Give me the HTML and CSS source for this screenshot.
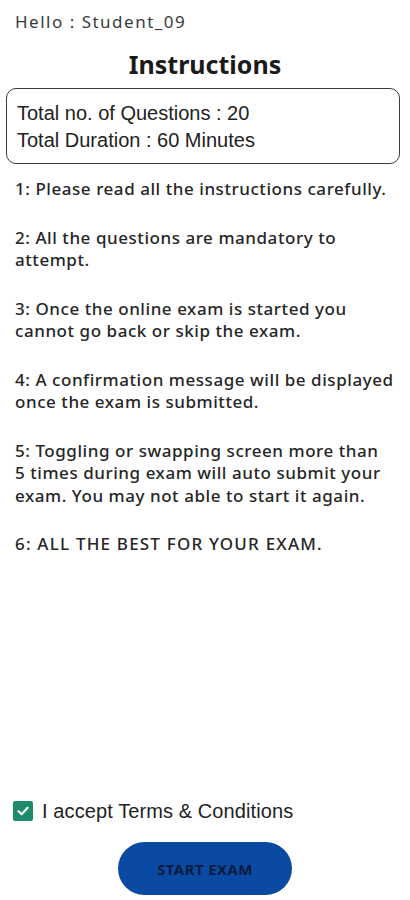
FILE: index.html
```html
<!DOCTYPE html>
<html lang="en">
<head>
    <meta charset="UTF-8">
    <meta name="viewport" content="width=device-width, initial-scale=1.0">
    <title>Instructions</title>
    <link rel="stylesheet" href="styles.css">
</head>
<body>
    <div class="page">
        <div class="greeting">Hello : Student_09</div>
        <h1 class="title">Instructions</h1>

        <div class="summary">
            <div>Total no. of Questions : 20</div>
            <div>Total Duration : 60 Minutes</div>
        </div>

        <div class="rules">
            <p>1: Please read all the instructions carefully.</p>
            <p>2: All the questions are mandatory to<br>attempt.</p>
            <p>3: Once the online exam is started you<br>cannot go back or skip the exam.</p>
            <p>4: A confirmation message will be displayed<br>once the exam is submitted.</p>
            <p>5: Toggling or swapping screen more than<br>5 times during exam will auto submit your<br>exam. You may not able to start it again.</p>
            <p class="wish">6: ALL THE BEST FOR YOUR EXAM.</p>
        </div>

        <div class="spacer"></div>

        <label class="terms">
            <span class="check">
                <svg width="14" height="14" viewBox="0 0 14 14">
                    <path d="M2.5 7.2 L5.6 10.2 L11.6 3.8" fill="none" stroke="#fff" stroke-width="2.2" stroke-linecap="round" stroke-linejoin="round"/>
                </svg>
            </span>
            I accept Terms &amp; Conditions
        </label>

        <button class="start-btn" type="button">START EXAM</button>
    </div>
</body>
</html>
```

FILE: styles.css
```css
body {
    margin: 0;
    font-family: "Noto Sans", sans-serif;
    background: #fff;
    color: #1b1b1b;
}

.page {
    display: flex;
    flex-direction: column;
    height: 100vh;
    box-sizing: border-box;
}

.greeting {
    padding: 12px 15px 0;
    font-size: 17px;
    line-height: 20px;
    letter-spacing: 1.5px;
    color: #3a3a3a;
}

.title {
    margin: 17px 0 0;
    text-align: center;
    font-size: 25px;
    line-height: 30px;
    font-weight: 700;
    color: #1a1a1a;
}

.summary {
    margin: 9px 10px 0 6px;
    padding: 11px 10px 9px;
    border: 1px solid #3c3c3c;
    border-radius: 10px;
    font-family: "Liberation Sans", Arial, sans-serif;
    font-size: 20px;
    line-height: 27px;
    color: #222;
}

.rules {
    margin-top: 14px;
    padding: 0 2px 0 15px;
    font-size: 17px;
    line-height: 22.5px;
    font-weight: 500;
    letter-spacing: 0.55px;
    color: #262626;
}

.rules p {
    margin: 0 0 26px;
}

.rules .wish {
    letter-spacing: 1.2px;
}

.spacer {
    flex: 1;
}

.terms {
    display: flex;
    align-items: center;
    gap: 9px;
    padding-left: 13px;
    font-family: "Liberation Sans", Arial, sans-serif;
    font-size: 20px;
    line-height: 24px;
    letter-spacing: 0.1px;
    color: #222;
}

.check {
    display: flex;
    justify-content: center;
    align-items: center;
    width: 20px;
    height: 20px;
    border-radius: 2px;
    background: #1d8a6c;
}

.start-btn {
    align-self: center;
    width: 174px;
    height: 53px;
    margin: 19px 0 5px;
    border: none;
    border-radius: 27px;
    background-color: #0a4aa3;
    color: #0b1c3d;
    font-family: "Noto Sans", sans-serif;
    font-size: 15px;
    font-weight: 700;
    letter-spacing: 0.4px;
}
```
